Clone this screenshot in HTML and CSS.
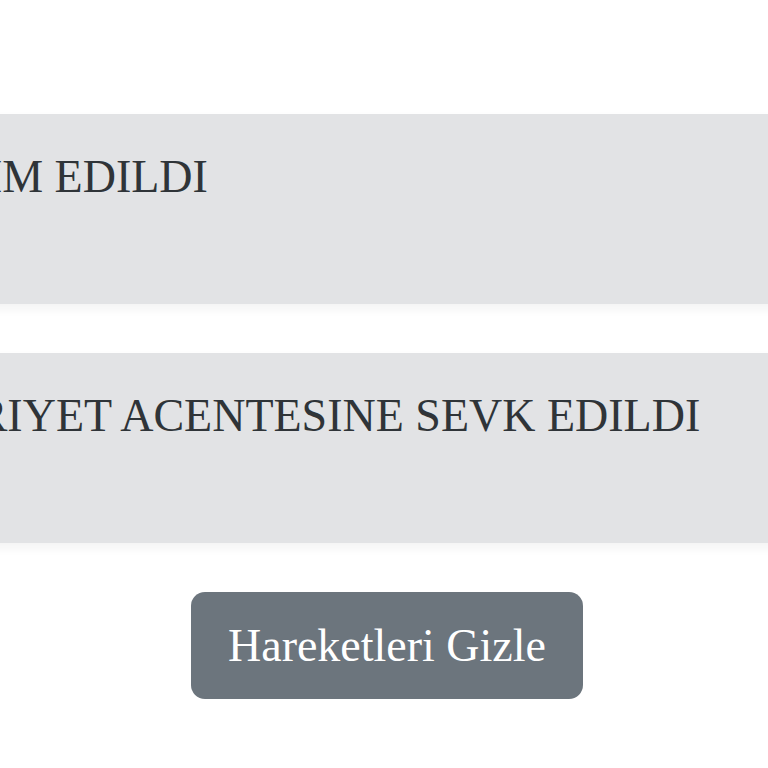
FILE: index.html
```html
<!DOCTYPE html>
<html lang="tr">
<head>
    <meta charset="UTF-8">
    <meta name="viewport" content="width=device-width, initial-scale=1.0">
    <title>Kargo Hareketleri</title>
    <link rel="stylesheet" href="styles.css">
</head>
<body>
    <div class="page">
        <div class="moves">
            <div class="move">
                <div class="move-title">TESLIM EDILDI</div>
            </div>
            <div class="move">
                <div class="move-title">NAKRIYET ACENTESINE SEVK EDILDI</div>
            </div>
        </div>

        <div class="actions">
            <button class="button secondary">Hareketleri Gizle</button>
        </div>
    </div>
</body>
</html>
```

FILE: styles.css
```css
html, body {
    margin: 0;
    background-color: #fff;
    overflow: hidden;
}

body {
    font-family: "Liberation Serif", "Times New Roman", serif;
    font-size: 46px;
}

.page {
    width: 768px;
    height: 768px;
    padding-top: 114px;
    box-sizing: border-box;
}

.moves {
    width: 1100px;
    margin-left: -159px;
}

.move {
    height: 190px;
    box-sizing: border-box;
    padding: 36px 36px;
    margin-bottom: 49px;
    background-color: #e2e3e5;
    color: #2f3438;
    box-shadow: 0 5px 10px rgba(0, 0, 0, 0.05);
}

.move-title {
    white-space: nowrap;
}

.actions {
    display: flex;
    justify-content: center;
    padding-left: 6px;
}

.button {
    font-family: inherit;
    font-size: 46px;
    line-height: 53px;
    padding: 27px 37px;
    border: none;
    border-radius: 14px;
    cursor: pointer;
}

.button.secondary {
    background-color: #6c757d;
    color: #fff;
}
```
